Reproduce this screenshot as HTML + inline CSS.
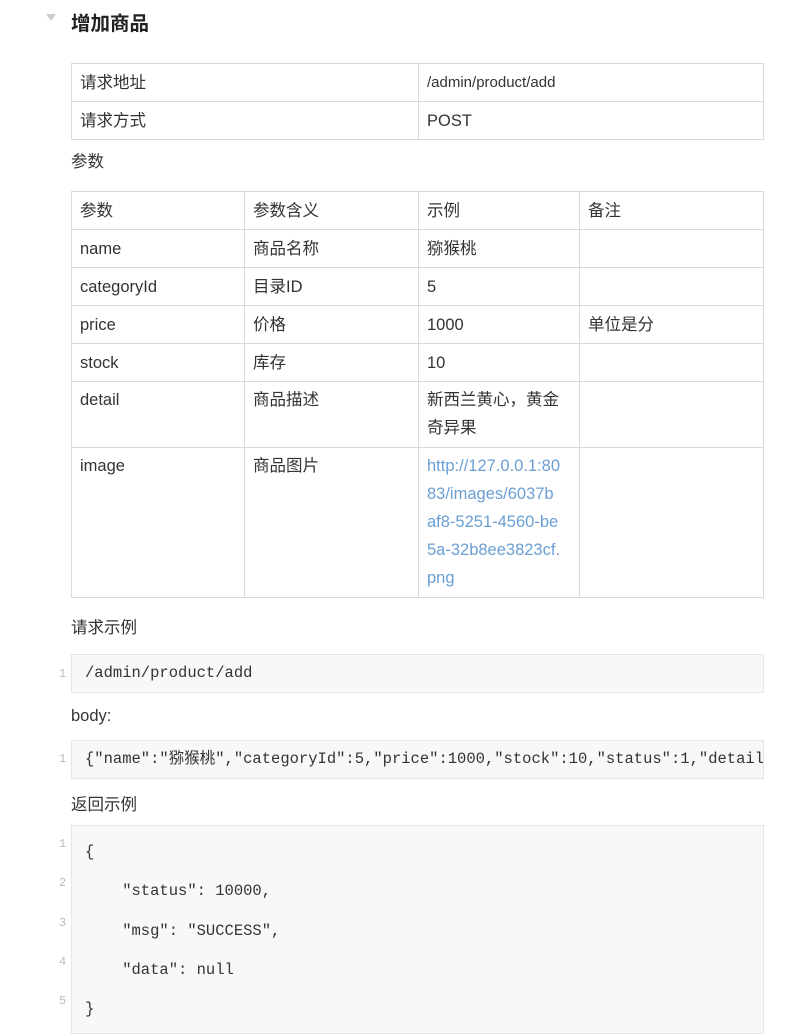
<!DOCTYPE html>
<html><head><meta charset="utf-8"><style>
body{margin:0;width:808px;height:1013px;overflow:hidden;background:#fff;font-family:"Liberation Sans","Noto Sans CJK SC",sans-serif;color:#333;position:relative}
.a{position:absolute}
table{position:absolute;border-collapse:collapse;font-size:16.5px;table-layout:fixed}
td{border:1px solid #dadada;padding:0 0 0 8px;height:37px;vertical-align:middle;line-height:28px;white-space:nowrap}
td.t{vertical-align:top;padding-top:4px}
.p{font-size:16.5px}
.code{position:absolute;left:71px;right:44px;background:#f8f8f8;border:1px solid #e6e6e6;font-family:"Liberation Mono","Noto Sans CJK SC",monospace;font-size:15.5px;color:#333;white-space:pre;overflow:hidden}
.ln{position:absolute;font-family:"Liberation Mono",monospace;font-size:12px;color:#bbb;left:59px}
a{color:#6a9fd4;text-decoration:none}
</style></head><body>
<div class="a" style="left:46px;top:14px;width:0;height:0;border-left:5px solid transparent;border-right:5px solid transparent;border-top:7px solid #ccc"></div>
<div class="a" style="left:71px;top:7px;font-size:19.5px;font-weight:bold;color:#222">增加商品</div>

<table style="left:71px;top:63px;width:692px">
<colgroup><col style="width:347px"><col style="width:345px"></colgroup>
<tr><td>请求地址</td><td style="font-size:15px">/admin/product/add</td></tr>
<tr><td>请求方式</td><td>POST</td></tr>
</table>

<div class="a p" style="left:71px;top:148px">参数</div>

<table style="left:71px;top:191px;width:692px">
<colgroup><col style="width:173px"><col style="width:174px"><col style="width:161px"><col style="width:184px"></colgroup>
<tr><td>参数</td><td>参数含义</td><td>示例</td><td>备注</td></tr>
<tr><td>name</td><td>商品名称</td><td>猕猴桃</td><td></td></tr>
<tr><td>categoryId</td><td>目录ID</td><td>5</td><td></td></tr>
<tr><td>price</td><td>价格</td><td>1000</td><td>单位是分</td></tr>
<tr><td>stock</td><td>库存</td><td>10</td><td></td></tr>
<tr style="height:66px"><td class="t">detail</td><td class="t">商品描述</td><td class="t">新西兰黄心，黄金<br>奇异果</td><td></td></tr>
<tr style="height:150px"><td class="t">image</td><td class="t">商品图片</td><td class="t"><a>http://127.0.0.1:80<br>83/images/6037b<br>af8-5251-4560-be<br>5a-32b8ee3823cf.<br>png</a></td><td></td></tr>
</table>

<div class="a p" style="left:71px;top:614px">请求示例</div>
<div class="ln" style="top:667px">1</div>
<div class="code" style="top:654px;height:37px;line-height:37px;padding-left:13px">/admin/product/add</div>

<div class="a p" style="left:71px;top:707px">body:</div>
<div class="ln" style="top:752px">1</div>
<div class="code" style="top:740px;height:37px;line-height:37px;padding-left:13px">{"name":"猕猴桃","categoryId":5,"price":1000,"stock":10,"status":1,"detail":"新西兰黄心，黄金奇异果"}</div>

<div class="a p" style="left:71px;top:791px">返回示例</div>
<div class="ln" style="top:837px">1</div>
<div class="ln" style="top:876px">2</div>
<div class="ln" style="top:916px">3</div>
<div class="ln" style="top:955px">4</div>
<div class="ln" style="top:994px">5</div>
<div class="code" style="top:825px;height:200px;padding-left:13px;line-height:39.3px;padding-top:7px">{
    "status": 10000,
    "msg": "SUCCESS",
    "data": null
}</div>
</body></html>
